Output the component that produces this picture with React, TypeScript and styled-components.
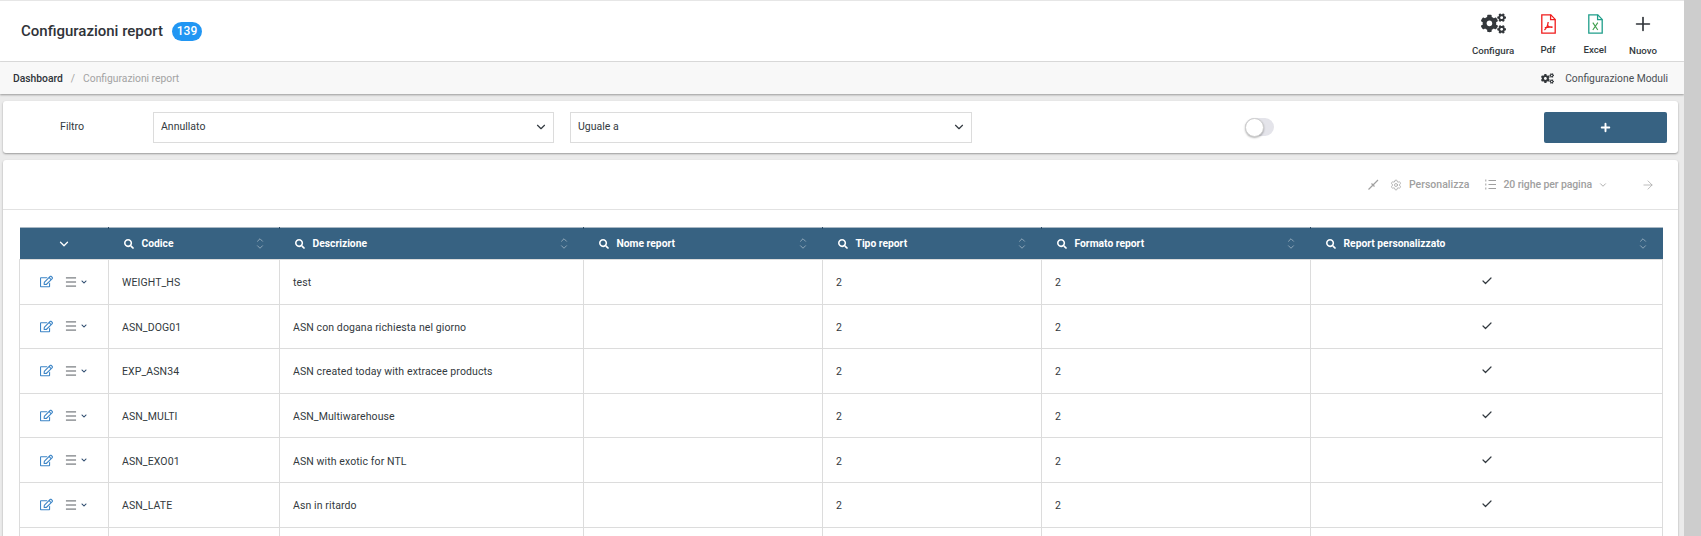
import React from 'react';
import styled, { createGlobalStyle } from 'styled-components';
import { FaCogs, FaRegEdit, FaSearch, FaChevronDown } from 'react-icons/fa';
import { ArrowRight, Check, ChevronDown, ChevronUp, Menu, Plus, Settings } from 'lucide-react';

const colors = {
    primary: '#376282',
    text: '#333a40',
    border: '#dcdcdc',
    muted: '#a0a0a0',
};

const GlobalStyle = createGlobalStyle`
    html, body {
        margin: 0;
        padding: 0;
        overflow: hidden;
        background: #ebebeb;
        font-family: Roboto, "Liberation Sans", sans-serif;
        color: ${colors.text};
    }
`;

const Screen = styled.div`
    display: flex;
    width: 1701px;
    height: 536px;
    overflow: hidden;
`;

const Scrollbar = styled.div`
    flex: 0 0 17px;
    background: #cdcdcd;
`;

const Main = styled.div`
    flex: 1;
    min-width: 0;
    display: flex;
    flex-direction: column;
`;

const Header = styled.header`
    flex: 0 0 62px;
    box-sizing: border-box;
    display: flex;
    align-items: center;
    justify-content: space-between;
    padding: 0 16px 0 21px;
    background: #fff;
    border-top: 1px solid #e6e6e6;
    border-bottom: 1px solid #dedede;
`;

const TitleRow = styled.div`
    display: flex;
    align-items: center;
    gap: 9px;
`;

const Title = styled.h1`
    margin: 0;
    font-size: 15px;
    font-weight: 500;
    color: #2f3338;
`;

const Badge = styled.span`
    display: block;
    width: 30px;
    height: 19px;
    border-radius: 10px;
    background: #2196f3;
    color: #fff;
    font-size: 12px;
    font-weight: 500;
    line-height: 19px;
    text-align: center;
`;

const Actions = styled.div`
    display: flex;
    align-items: flex-start;
    padding-top: 2px;
`;

const Action = styled.button<{ $width: number; $labelUp?: boolean }>`
    width: ${(p) => p.$width}px;
    height: ${(p) => (p.$labelUp ? 46 : 47)}px;
    padding: 0;
    border: 0;
    background: none;
    display: flex;
    flex-direction: column;
    align-items: center;
    justify-content: space-between;
    font-family: inherit;
    font-size: 9.7px;
    font-weight: 500;
    color: #333a40;
`;

const ActionIcon = styled.span`
    height: 30px;
    display: flex;
    align-items: center;
`;

const Breadcrumb = styled.nav`
    flex: 0 0 32px;
    box-sizing: border-box;
    display: flex;
    align-items: center;
    justify-content: space-between;
    padding: 0 16px 0 13px;
    background: #f8f8f8;
    box-shadow: 0 1px 2px rgba(0, 0, 0, 0.35);
    font-size: 10.3px;
`;

const Crumbs = styled.div`
    display: flex;
    align-items: center;
    gap: 8px;
`;

const CrumbLink = styled.span`
    font-weight: 500;
    color: #2f3338;
`;

const CrumbCurrent = styled.span`
    color: #a3a3a3;
`;

const ModulesLink = styled.span`
    display: flex;
    align-items: center;
    gap: 11px;
    color: #4a4f54;
`;

const Card = styled.section`
    margin: 0 6px 0 3px;
    background: #fff;
    border-radius: 3px;
    box-shadow: 0 1px 2px rgba(0, 0, 0, 0.35);
`;

const FilterCard = styled(Card)`
    flex: 0 0 52px;
    margin-top: 7px;
    display: flex;
    align-items: center;
    padding: 0 11px 0 0;
`;

const FilterLabel = styled.label`
    flex: 0 0 150px;
    box-sizing: border-box;
    padding-left: 57px;
    padding-bottom: 1px;
    font-size: 10.7px;
`;

const Select = styled.div<{ $width: number }>`
    box-sizing: border-box;
    flex: 0 0 ${(p) => p.$width}px;
    height: 31px;
    margin-right: 16px;
    padding: 0 5px 1px 7px;
    display: flex;
    align-items: center;
    justify-content: space-between;
    border: 1px solid ${colors.border};
    font-size: 10.5px;
`;

const ToggleSlot = styled.div`
    flex: 1;
    display: flex;
    justify-content: center;
    padding-right: 14px;
`;

const Toggle = styled.span`
    position: relative;
    display: block;
    width: 29px;
    height: 18px;
    border-radius: 9px;
    background: #e4e4ea;

    &::after {
        content: '';
        position: absolute;
        left: 0;
        top: 0;
        width: 17px;
        height: 17px;
        border-radius: 50%;
        background: #fff;
        border: 0.5px solid #cfcfcf;
        box-shadow: 0 1px 2px rgba(0, 0, 0, 0.3);
    }
`;

const AddButton = styled.button`
    flex: 0 0 123px;
    height: 31px;
    padding: 0;
    border: 0;
    border-radius: 2px;
    background: ${colors.primary};
    color: #fff;
    display: flex;
    align-items: center;
    justify-content: center;
`;

const TableCard = styled(Card)`
    flex: 1;
    margin-top: 7px;
    margin-bottom: -20px;
`;

const TableToolbar = styled.div`
    height: 49px;
    display: flex;
    align-items: center;
    justify-content: flex-end;
    padding-right: 23px;
    border-bottom: 1px solid #e2e2e2;
    color: ${colors.muted};
    font-size: 10.5px;
    font-weight: 500;
`;

const ToolItem = styled.span<{ $gap?: number; $left?: number }>`
    display: flex;
    align-items: center;
    gap: ${(p) => p.$gap ?? 7}px;
    margin-left: ${(p) => p.$left ?? 0}px;
`;

const RowsPerPage = styled.span`
    letter-spacing: -0.1px;
`;

const TableWrap = styled.div`
    padding: 17px 16px 0 16px;
`;

const Table = styled.table`
    width: 1643px;
    table-layout: fixed;
    border-collapse: collapse;
    font-size: 10.5px;
`;

const HeadRow = styled.tr`
    height: 32px;
    background: ${colors.primary};
    color: #fff;
    border-top: 1px solid #a9b8c4;
    box-shadow: inset 0 -1px 0 #dfe6ea;
    border-bottom: 1px solid #2d4f69;
`;

const HeadCell = styled.th`
    position: relative;
    padding: 0;
    font-weight: 700;
    text-align: left;

    &:not(:first-child)::before {
        content: '';
        position: absolute;
        left: -1px;
        top: -1px;
        width: 1px;
        height: 2px;
        background: #2d4f69;
    }
`;

const HeadInner = styled.div`
    display: flex;
    align-items: center;
    padding: 0 15px 0 15px;
    gap: 8px;
`;

const HeadLabel = styled.span`
    flex: 1;
    font-size: 10.3px;
`;

const Sort = styled.span`
    display: flex;
    flex-direction: column;
    align-items: center;
    color: #9fb3c2;

    svg + svg {
        margin-top: -3px;
    }
`;

const ToggleAll = styled.div`
    display: flex;
    justify-content: center;
`;

const Row = styled.tr`
    height: 44.6px;
`;

const Cell = styled.td<{ $center?: boolean }>`
    padding: 2px 0 0 ${(p) => (p.$center ? 0 : 13)}px;
    border: 1px solid ${colors.border};
    text-align: ${(p) => (p.$center ? 'center' : 'left')};
    letter-spacing: 0.1px;
`;

const ActionCell = styled.td`
    padding: 0;
    border: 1px solid ${colors.border};
`;

const RowActions = styled.div`
    display: flex;
    align-items: center;
    padding-left: 20px;
    gap: 11px;
`;

const RowMenu = styled.span`
    display: flex;
    align-items: center;
    gap: 3px;
    color: #333a40;
`;

const columns = [
    { label: '', width: 89 },
    { label: 'Codice', width: 171 },
    { label: 'Descrizione', width: 304 },
    { label: 'Nome report', width: 239 },
    { label: 'Tipo report', width: 219 },
    { label: 'Formato report', width: 269 },
    { label: 'Report personalizzato', width: 352 },
];

const rows = [
    { code: 'WEIGHT_HS', description: 'test' },
    { code: 'ASN_DOG01', description: 'ASN con dogana richiesta nel giorno' },
    { code: 'EXP_ASN34', description: 'ASN created today with extracee products' },
    { code: 'ASN_MULTI', description: 'ASN_Multiwarehouse' },
    { code: 'ASN_EXO01', description: 'ASN with exotic for NTL' },
    { code: 'ASN_LATE', description: 'Asn in ritardo' },
];

const PdfIcon = () => (
    <svg width="15" height="20" viewBox="0 0 15 20" fill="none" stroke="#f01c1c" strokeWidth="1.3">
        <path d="M0.8 0.8h9l4.4 4.6v13.8H0.8z" />
        <path d="M9.6 0.8v4.8h4.6" />
        <path d="M3.4 16c2-1.4 3.3-4 3.8-8M6.4 11.4c1.2 1.4 3 2 5.2 1.8M3.8 13.6l7.6-0.8" />
    </svg>
);

const ExcelIcon = () => (
    <svg width="15" height="20" viewBox="0 0 15 20" fill="none" stroke="#1f9e8a" strokeWidth="1.3">
        <path d="M0.8 0.8h9l4.4 4.6v13.8H0.8z" />
        <path d="M9.6 0.8v4.8h4.6" />
        <path d="M4.8 8.6l5 7.4M9.8 8.6l-5 7.4" stroke="#3f9e4d" strokeWidth="1.1" />
    </svg>
);

const PinIcon = () => (
    <svg width="11" height="11" viewBox="0 0 11 11" fill="none" stroke="currentColor" strokeWidth="1.2">
        <path d="M0.5 10.5l5-5M3.5 4.5l3 3M5 6l5-5" />
    </svg>
);

const ListIcon = () => (
    <svg width="11" height="11" viewBox="0 0 11 11" fill="none" stroke="currentColor" strokeWidth="1">
        <path d="M0.8 0.5v2M0.8 4.5v2M0.8 8.5v2M3.5 1.5h7.5M3.5 5.5h7.5M3.5 9.5h7.5" />
    </svg>
);

const SortIcon = () => (
    <Sort>
        <ChevronUp size={10} strokeWidth={2} />
        <ChevronDown size={10} strokeWidth={2} />
    </Sort>
);

export default function App() {
    return (
        <Screen>
            <GlobalStyle />
            <Main>
                <Header>
                    <TitleRow>
                        <Title>Configurazioni report</Title>
                        <Badge>139</Badge>
                    </TitleRow>
                    <Actions>
                        <Action $width={62}>
                            <ActionIcon><FaCogs size={25} color="#33373b" /></ActionIcon>
                            Configura
                        </Action>
                        <Action $width={48} $labelUp>
                            <ActionIcon><PdfIcon /></ActionIcon>
                            Pdf
                        </Action>
                        <Action $width={46} $labelUp>
                            <ActionIcon><ExcelIcon /></ActionIcon>
                            Excel
                        </Action>
                        <Action $width={50}>
                            <ActionIcon><Plus size={22} strokeWidth={1.8} color="#2f3338" /></ActionIcon>
                            Nuovo
                        </Action>
                    </Actions>
                </Header>
                <Breadcrumb>
                    <Crumbs>
                        <CrumbLink>Dashboard</CrumbLink>
                        <CrumbCurrent>/</CrumbCurrent>
                        <CrumbCurrent>Configurazioni report</CrumbCurrent>
                    </Crumbs>
                    <ModulesLink>
                        <FaCogs size={13} color="#33373b" />
                        Configurazione Moduli
                    </ModulesLink>
                </Breadcrumb>
                <FilterCard>
                    <FilterLabel>Filtro</FilterLabel>
                    <Select $width={401}>
                        Annullato
                        <ChevronDown size={14} strokeWidth={2} />
                    </Select>
                    <Select $width={402}>
                        Uguale a
                        <ChevronDown size={14} strokeWidth={2} />
                    </Select>
                    <ToggleSlot><Toggle /></ToggleSlot>
                    <AddButton><Plus size={13} strokeWidth={3.5} /></AddButton>
                </FilterCard>
                <TableCard>
                    <TableToolbar>
                        <PinIcon />
                        <ToolItem $left={11}>
                            <Settings size={12} strokeWidth={1.5} />
                            Personalizza
                        </ToolItem>
                        <ToolItem $left={16}>
                            <ListIcon />
                            <RowsPerPage>20 righe per pagina</RowsPerPage>
                        </ToolItem>
                        <ToolItem $left={6}><ChevronDown size={10} /></ToolItem>
                        <ToolItem $left={33}><ArrowRight size={14} strokeWidth={1.2} /></ToolItem>
                    </TableToolbar>
                    <TableWrap>
                        <Table>
                            <colgroup>
                                {columns.map((c) => <col key={c.label} width={c.width} />)}
                            </colgroup>
                            <thead>
                                <HeadRow>
                                    {columns.map((c) => (
                                        <HeadCell key={c.label}>
                                            {c.label ? (
                                                <HeadInner>
                                                    <FaSearch size={10} />
                                                    <HeadLabel>{c.label}</HeadLabel>
                                                    <SortIcon />
                                                </HeadInner>
                                            ) : (
                                                <ToggleAll><ChevronDown size={14} strokeWidth={2.2} /></ToggleAll>
                                            )}
                                        </HeadCell>
                                    ))}
                                </HeadRow>
                            </thead>
                            <tbody>
                                {rows.map((r) => (
                                    <Row key={r.code}>
                                        <ActionCell>
                                            <RowActions>
                                                <FaRegEdit size={13} color="#3d85c6" />
                                                <RowMenu>
                                                    <Menu size={14} strokeWidth={1.4} />
                                                    <FaChevronDown size={6} color="#2c4a6e" />
                                                </RowMenu>
                                            </RowActions>
                                        </ActionCell>
                                        <Cell>{r.code}</Cell>
                                        <Cell>{r.description}</Cell>
                                        <Cell />
                                        <Cell>2</Cell>
                                        <Cell>2</Cell>
                                        <Cell $center><Check size={12} strokeWidth={2.4} /></Cell>
                                    </Row>
                                ))}
                                <Row>
                                    {columns.map((c) => <Cell key={c.label} />)}
                                </Row>
                            </tbody>
                        </Table>
                    </TableWrap>
                </TableCard>
            </Main>
            <Scrollbar />
        </Screen>
    );
}
